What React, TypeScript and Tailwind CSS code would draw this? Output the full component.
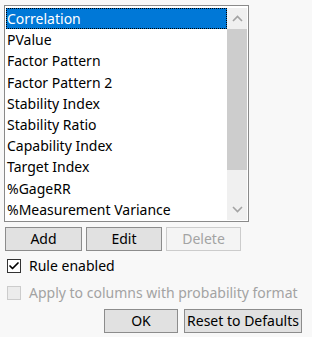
import { Check } from "lucide-react";

const items = [
  "Correlation",
  "PValue",
  "Factor Pattern",
  "Factor Pattern 2",
  "Stability Index",
  "Stability Ratio",
  "Capability Index",
  "Target Index",
  "%GageRR",
  "%Measurement Variance",
];

function Btn({ label, disabled, className = "" }: { label: string; disabled?: boolean; className?: string }) {
  return (
    <button
      disabled={disabled}
      className={
        "flex h-[24px] items-center justify-center whitespace-nowrap border text-[14px] leading-none " +
        (disabled
          ? "border-[#cccccc] bg-[#f4f4f4] text-[#a3a3a3] "
          : "border-[#8c8c8c] bg-[#e1e1e1] text-black ") +
        className
      }
    >
      {label}
    </button>
  );
}

export default function App() {
  return (
    <div
      className="h-[337px] w-[312px] overflow-hidden bg-[#f8f8f8] pl-[4px] pt-[5px] text-black"
      style={{ fontFamily: '"Segoe UI", "Noto Sans", sans-serif' }}
    >
      <div className="flex h-[217px] w-[245px] border border-[#8a8a8a] bg-white p-[1px]">
        <ul className="flex-1 pt-[1px]">
          {items.map((item, i) => (
            <li
              key={item}
              className={
                "h-[21.2px] whitespace-nowrap text-[14px] leading-[20px] " +
                (i === 0
                  ? "border border-dotted border-black bg-[#0078d7] text-white"
                  : "border border-transparent")
              }
            >
              {item}
            </li>
          ))}
        </ul>
        <div className="mt-[1px] flex w-[20px] flex-col bg-[#f0f0f0]">
          <div className="flex h-[21px] items-center justify-center">
            <svg width="11" height="7" viewBox="0 0 11 7">
              <path d="M1 6 L5.5 1.5 L10 6" fill="none" stroke="#a3a3a3" strokeWidth="1.6" />
            </svg>
          </div>
          <div className="h-[141px] bg-[#cdcdcd]" />
          <div className="flex-1" />
          <div className="flex h-[21px] items-center justify-center">
            <svg width="11" height="7" viewBox="0 0 11 7">
              <path d="M1 1 L5.5 5.5 L10 1" fill="none" stroke="#a3a3a3" strokeWidth="1.6" />
            </svg>
          </div>
        </div>
      </div>

      <div className="mt-[5px] flex gap-[4px] pl-[1px]">
        <Btn label="Add" className="w-[77px]" />
        <Btn label="Edit" className="w-[76px]" />
        <Btn label="Delete" disabled className="w-[75px]" />
      </div>

      <label className="mt-[7px] flex h-[15px] items-center gap-[8px] whitespace-nowrap pl-[3px] text-[14px]">
        <span className="flex h-[14px] w-[14px] items-center justify-center border border-[#333333] bg-white">
          <Check size={12} strokeWidth={3.5} />
        </span>
        Rule enabled
      </label>

      <label className="mt-[12px] flex h-[15px] items-center gap-[8px] whitespace-nowrap pl-[3px] text-[14px] text-[#a3a3a3]">
        <span className="h-[14px] w-[14px] border border-[#cccccc] bg-[#ececec]" />
        Apply to columns with probability format
      </label>

      <div className="mt-[9px] flex justify-end gap-[6px] pr-[10px]">
        <Btn label="OK" className="w-[74px]" />
        <Btn label="Reset to Defaults" className="w-[118px] border-[#6e6e6e]" />
      </div>
    </div>
  );
}
